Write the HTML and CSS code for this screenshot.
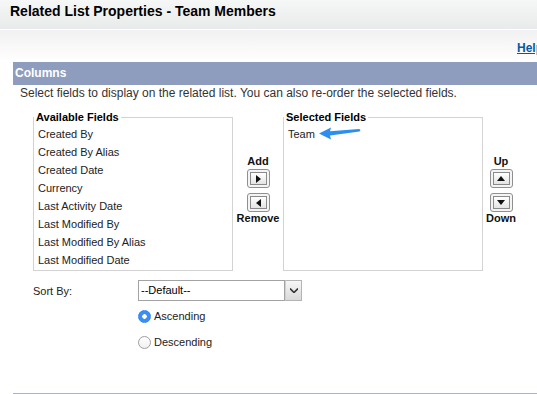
FILE: index.html
```html
<!DOCTYPE html>
<html lang="en">
<head>
  <meta charset="UTF-8">
  <meta name="viewport" content="width=device-width, initial-scale=1.0">
  <title>Related List Properties - Team Members</title>
  <link rel="stylesheet" href="styles.css">
</head>
<body>
<div class="page">
  <!-- Page title -->
  <div class="title-bar">
    <h1>Related List Properties - Team Members</h1>
  </div>
  <div class="help-bar">
    <a href="#">Help</a>
  </div>

  <!-- Columns section -->
  <div class="section">
    <h2 class="section-head">Columns</h2>
    <p class="instructions">Select fields to display on the related list. You can also re-order the selected fields.</p>

    <div class="duel">
      <fieldset class="picklist">
        <legend>Available Fields</legend>
        <ul>
          <li>Created By</li>
          <li>Created By Alias</li>
          <li>Created Date</li>
          <li>Currency</li>
          <li>Last Activity Date</li>
          <li>Last Modified By</li>
          <li>Last Modified By Alias</li>
          <li>Last Modified Date</li>
        </ul>
      </fieldset>

      <div class="mover">
        <span class="mover-label">Add</span>
        <button type="button" class="move-btn" title="Add">
          <span><svg width="5" height="8" viewBox="0 0 5 8"><path d="M0 0L5 4L0 8Z" fill="#111"/></svg></span>
        </button>
        <button type="button" class="move-btn second" title="Remove">
          <span><svg width="5" height="8" viewBox="0 0 5 8"><path d="M5 0L0 4L5 8Z" fill="#111"/></svg></span>
        </button>
        <span class="mover-label">Remove</span>
      </div>

      <fieldset class="picklist">
        <legend>Selected Fields</legend>
        <ul>
          <li>Team<svg class="pointer" width="44" height="14" viewBox="0 0 44 14"><path d="M1 7.5L13 1.5L12 5.2L41 3Q43.5 3.6 41.5 5.6L12 9.6L13 13.5Z" fill="#2b8ef0"/></svg></li>
        </ul>
      </fieldset>

      <div class="mover narrow">
        <span class="mover-label">Up</span>
        <button type="button" class="move-btn" title="Up">
          <span><svg width="8" height="5" viewBox="0 0 8 5"><path d="M0 5L4 0L8 5Z" fill="#111"/></svg></span>
        </button>
        <button type="button" class="move-btn second" title="Down">
          <span><svg width="8" height="5" viewBox="0 0 8 5"><path d="M0 0L8 0L4 5Z" fill="#111"/></svg></span>
        </button>
        <span class="mover-label">Down</span>
      </div>
    </div>

    <div class="sort-row">
      <label class="sort-label" for="sortBy">Sort By:</label>
      <div class="select">
        <span class="select-value" id="sortBy">--Default--</span>
        <span class="select-arrow"><svg width="8" height="5" viewBox="0 0 8 5"><path d="M0 0.5L4 4.5L8 0.5" fill="none" stroke="#333" stroke-width="1.6"/></svg></span>
      </div>
    </div>
    <div class="sort-options">
      <label class="radio-row"><input type="radio" name="order" checked> Ascending</label>
      <label class="radio-row"><input type="radio" name="order"> Descending</label>
    </div>
  </div>
</div>
</body>
</html>
```

FILE: styles.css
```css
html, body {
  margin: 0;
  overflow: hidden;
}
body {
  font-family: "Liberation Sans", Arial, sans-serif;
  font-size: 11px;
  color: #222;
  background: #fff;
}
.page {
  width: 543px;
}

/* header */
.title-bar {
  height: 26px;
  padding: 3px 0 0 10px;
  background: linear-gradient(#f6f7f7, #e8ebeb);
  border-bottom: 1px solid #fff;
}
h1 {
  margin: 0;
  font-size: 14px;
  line-height: 16px;
  color: #000;
}
.help-bar {
  height: 32px;
  background: linear-gradient(#f1f1f1, #fff);
  text-align: right;
}
.help-bar a {
  display: inline-block;
  padding-top: 11px;
  font-size: 12px;
  line-height: 14px;
  font-weight: bold;
  color: #015ba7;
}

/* section */
.section {
  margin-left: 13px;
  border-bottom: 1px solid #a9b4cb;
}
.section-head {
  margin: 0;
  padding-left: 2px;
  background: #8e9dbe;
  color: #fff;
  font-size: 12px;
  line-height: 23px;
}
.instructions {
  margin: 0;
  padding: 1px 0 0 7px;
  font-size: 12px;
  line-height: 14px;
  color: #333;
}

/* duel list */
.duel {
  display: flex;
  align-items: flex-start;
  padding: 11px 0 0 20px;
}
.picklist {
  width: 198px;
  height: 158px;
  margin: 0;
  padding: 0;
  border: 1px solid #d3d3d3;
}
.picklist legend {
  padding: 0 2px;
  font-weight: bold;
  line-height: 13px;
  color: #000;
}
.picklist ul {
  list-style: none;
  margin: 0;
  padding: 1px 0 0 4px;
}
.picklist li {
  line-height: 18px;
}
.pointer {
  margin-left: 3px;
  vertical-align: -2px;
}
.mover {
  width: 50px;
  display: flex;
  flex-direction: column;
  align-items: center;
  padding-top: 44px;
}
.mover.narrow {
  width: 36px;
}
.mover-label {
  font-weight: bold;
  line-height: 13px;
  color: #111;
}
.move-btn {
  width: 23px;
  height: 19px;
  margin: 1px 0 0;
  padding: 2px;
  box-sizing: border-box;
  border: 1px solid #909090;
  border-radius: 3px;
  background: #f4f4f4;
}
.move-btn.second {
  margin-top: 5px;
}
.move-btn span {
  display: flex;
  align-items: center;
  justify-content: center;
  height: 100%;
  box-sizing: border-box;
  border: 1px solid #8a8a8a;
  background: linear-gradient(#fff, #e4e4e4);
}

/* sort */
.sort-row {
  display: flex;
  align-items: center;
  padding: 9px 0 0 20px;
}
.sort-label {
  width: 105px;
  color: #222;
}
.select {
  display: flex;
  width: 164px;
  height: 21px;
}
.select-value {
  flex: 1;
  padding-left: 2px;
  border: 1px solid #a3a3a3;
  line-height: 19px;
  color: #000;
}
.select-arrow {
  width: 15px;
  display: flex;
  align-items: center;
  justify-content: center;
  border: 1px solid #b4b4b4;
  border-left-color: #d0d0d0;
  background: linear-gradient(#f7f7f7, #d9d9d9);
}
.sort-options {
  display: flex;
  flex-direction: column;
  gap: 12px;
  padding: 8px 0 44px 125px;
}
.radio-row {
  display: flex;
  align-items: center;
  height: 14px;
  gap: 3px;
  color: #222;
}
.radio-row input {
  appearance: none;
  width: 13px;
  height: 13px;
  margin: 0;
  border-radius: 50%;
  border: 1px solid #9e9e9e;
  background: linear-gradient(#fff, #f1f1f1);
}
.radio-row input:checked {
  border-color: #2f86f0;
  background: radial-gradient(circle, #fff 0 2px, #3a8ef6 2.5px);
}
```
